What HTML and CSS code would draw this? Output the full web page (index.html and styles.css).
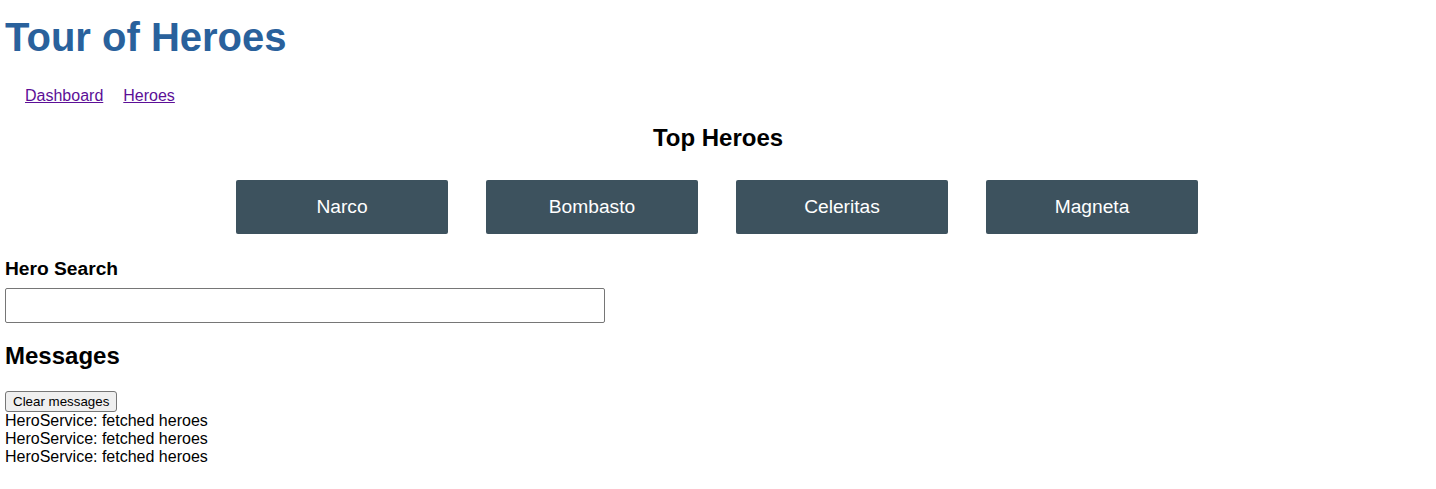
FILE: index.html
```html
<!DOCTYPE html>
<html lang="en">
<head>
<meta charset="utf-8">
<title>Tour of Heroes</title>
<link rel="stylesheet" href="styles.css">
</head>
<body>
<h1 class="app-title">Tour of Heroes</h1>
<nav class="main-nav">
  <a href="#dashboard" class="nav-link">Dashboard</a>
  <a href="#heroes" class="nav-link">Heroes</a>
</nav>
<h2 class="section-title centered">Top Heroes</h2>
<div class="heroes-menu">
  <a href="#12" class="hero-card">Narco</a>
  <a href="#13" class="hero-card">Bombasto</a>
  <a href="#14" class="hero-card">Celeritas</a>
  <a href="#15" class="hero-card">Magneta</a>
</div>
<div class="search-component">
  <label for="search-box" class="search-label">Hero Search</label>
  <input id="search-box" class="search-box" type="text">
</div>
<div class="messages">
  <h2 class="section-title messages-title">Messages</h2>
  <button class="clear-btn" type="button">Clear messages</button>
  <div class="message">HeroService: fetched heroes</div>
  <div class="message">HeroService: fetched heroes</div>
  <div class="message">HeroService: fetched heroes</div>
</div>
</body>
</html>
```
FILE: styles.css
```css
html, body {
  background: #fff;
}
body {
  margin: 0;
  padding: 0 5px;
  font-family: "Liberation Sans", Arial, sans-serif;
  font-size: 16px;
  color: #000;
}
.app-title {
  font-size: 40px;
  font-weight: bold;
  color: #29619c;
  margin: 14px 0 27px;
  line-height: 46px;
}
.main-nav {
  display: flex;
  gap: 20px;
  padding-left: 20px;
  line-height: 18px;
}
.nav-link {
  color: #5c0f97;
  text-decoration: underline;
}
.section-title {
  font-size: 24px;
  font-weight: bold;
  margin: 19px 0 20px;
}
.centered {
  text-align: center;
}
.heroes-menu {
  max-width: 1000px;
  margin: 0 auto;
  padding-right: 2px;
  display: flex;
  flex-wrap: wrap;
  justify-content: space-around;
  align-items: flex-start;
}
.hero-card {
  background-color: #3d525e;
  border-radius: 2px;
  padding: 16px;
  font-size: 19.2px;
  line-height: 22px;
  text-decoration: none;
  color: #fff;
  text-align: center;
  width: 180px;
  margin: 8px 0;
}
.search-label {
  display: block;
  font-weight: bold;
  font-size: 19.2px;
  line-height: 22px;
  margin-top: 16px;
  margin-bottom: 8px;
}
.search-box {
  display: block;
  box-sizing: border-box;
  width: 100%;
  max-width: 600px;
  height: 35px;
  padding: 8px;
  margin: 0;
  border: 1px solid #767676;
  border-radius: 2px;
  font-family: "Liberation Sans", Arial, sans-serif;
  font-size: 13.333px;
}
.messages-title {
  margin: 19px 0 21px;
}
.clear-btn {
  font-family: "Liberation Sans", Arial, sans-serif;
  font-size: 13.333px;
  padding: 1px 7px;
  margin: 0;
  background: #efefef;
  border: 1px solid #767676;
  border-radius: 3px;
  color: #000;
  height: 21px;
  display: block;
}
.message {
  line-height: 18px;
}
```
